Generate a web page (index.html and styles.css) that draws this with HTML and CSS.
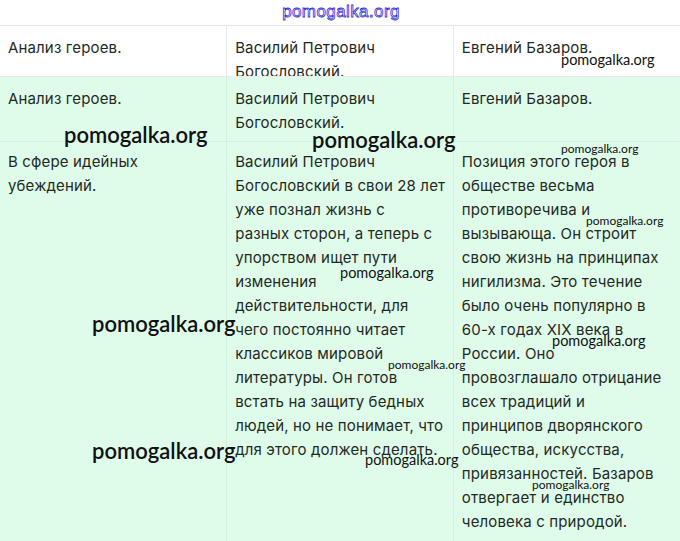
FILE: index.html
```html
<!DOCTYPE html>
<html lang="ru">
<head>
<meta charset="utf-8">
<title>Анализ героев</title>
<link rel="stylesheet" href="styles.css">
</head>
<body>
<div class="page">
  <div class="site-mark">pomogalka.org</div>
  <table class="heroes">
    <tr class="row-head">
      <td><div class="clip">Анализ героев.</div></td>
      <td><div class="clip">Василий Петрович<br>Богословский.</div></td>
      <td><div class="clip">Евгений Базаров.</div></td>
    </tr>
    <tr class="row-green">
      <td>Анализ героев.</td>
      <td>Василий Петрович<br>Богословский.</td>
      <td>Евгений Базаров.</td>
    </tr>
    <tr class="row-green row-body">
      <td>В сфере идейных<br>убеждений.</td>
      <td>Василий Петрович<br>Богословский в свои 28 лет<br>уже познал жизнь с<br>разных сторон, а теперь с<br>упорством ищет пути<br>изменения<br>действительности, для<br>чего постоянно читает<br>классиков мировой<br>литературы. Он готов<br>встать на защиту бедных<br>людей, но не понимает, что<br>для этого должен сделать.</td>
      <td>Позиция этого героя в<br>обществе весьма<br>противоречива и<br>вызывающа. Он строит<br>свою жизнь на принципах<br>нигилизма. Это течение<br>было очень популярно в<br>60-х годах XIX века в<br>России. Оно<br>провозглашало отрицание<br>всех традиций и<br>принципов дворянского<br>общества, искусства,<br>привязанностей. Базаров<br>отвергает и единство<br>человека с природой.</td>
    </tr>
  </table>

  <span class="wm wm-m" style="left:561px;top:53px">pomogalka.org</span>
  <span class="wm wm-l" style="left:64px;top:124px">pomogalka.org</span>
  <span class="wm wm-l" style="left:312px;top:129px">pomogalka.org</span>
  <span class="wm wm-s" style="left:561px;top:143px">pomogalka.org</span>
  <span class="wm wm-s" style="left:586px;top:215px">pomogalka.org</span>
  <span class="wm wm-m" style="left:340px;top:266px">pomogalka.org</span>
  <span class="wm wm-l" style="left:92px;top:313px">pomogalka.org</span>
  <span class="wm wm-m" style="left:552px;top:334px">pomogalka.org</span>
  <span class="wm wm-s" style="left:388px;top:359px">pomogalka.org</span>
  <span class="wm wm-l" style="left:92px;top:440px">pomogalka.org</span>
  <span class="wm wm-m" style="left:365px;top:453px">pomogalka.org</span>
  <span class="wm wm-s" style="left:532px;top:479px">pomogalka.org</span>
</div>
</body>
</html>
```

FILE: styles.css
```css
html, body {
  margin: 0;
  padding: 0;
  background: #ffffff;
}

.page {
  position: relative;
  width: 680px;
  height: 541px;
  overflow: hidden;
  font-family: "Inter", "DejaVu Sans", sans-serif;
  color: #1f2a24;
}

.site-mark {
  height: 25px;
  line-height: 24px;
  text-align: center;
  font-family: "Liberation Sans", sans-serif;
  font-size: 17px;
  letter-spacing: 0.4px;
  color: #ffffff;
  -webkit-text-stroke: 0.8px #3034d8;
  padding-left: 2px;
}

.heroes {
  width: 680px;
  border-collapse: collapse;
  table-layout: fixed;
  font-size: 15px;
  line-height: 24px;
  letter-spacing: 0.15px;
}

.heroes td {
  vertical-align: top;
  padding: 10px 8px 6px 8px;
  border: 1px solid #e9ecea;
  width: 33.333%;
  white-space: nowrap;
}

.heroes td:first-child { border-left: none; }
.heroes td:last-child { border-right: none; }

.row-head td {
  height: 49px;
  padding-bottom: 0;
  box-sizing: border-box;
  background: #ffffff;
  border-top-color: #e6e8e7;
}

.row-head .clip {
  height: 40px;
  overflow: hidden;
}

.row-green td {
  background: #dffbea;
  border-color: #d3f0de;
}

.row-body td {
  padding-top: 8px;
  padding-bottom: 12px;
}

.wm {
  position: absolute;
  font-family: "Lato", "Open Sans", sans-serif;
  color: #111111;
  white-space: nowrap;
  line-height: 1;
}

.wm-l { font-size: 22px; font-weight: 600; }
.wm-m { font-size: 14.5px; }
.wm-s { font-size: 12px; }
```
